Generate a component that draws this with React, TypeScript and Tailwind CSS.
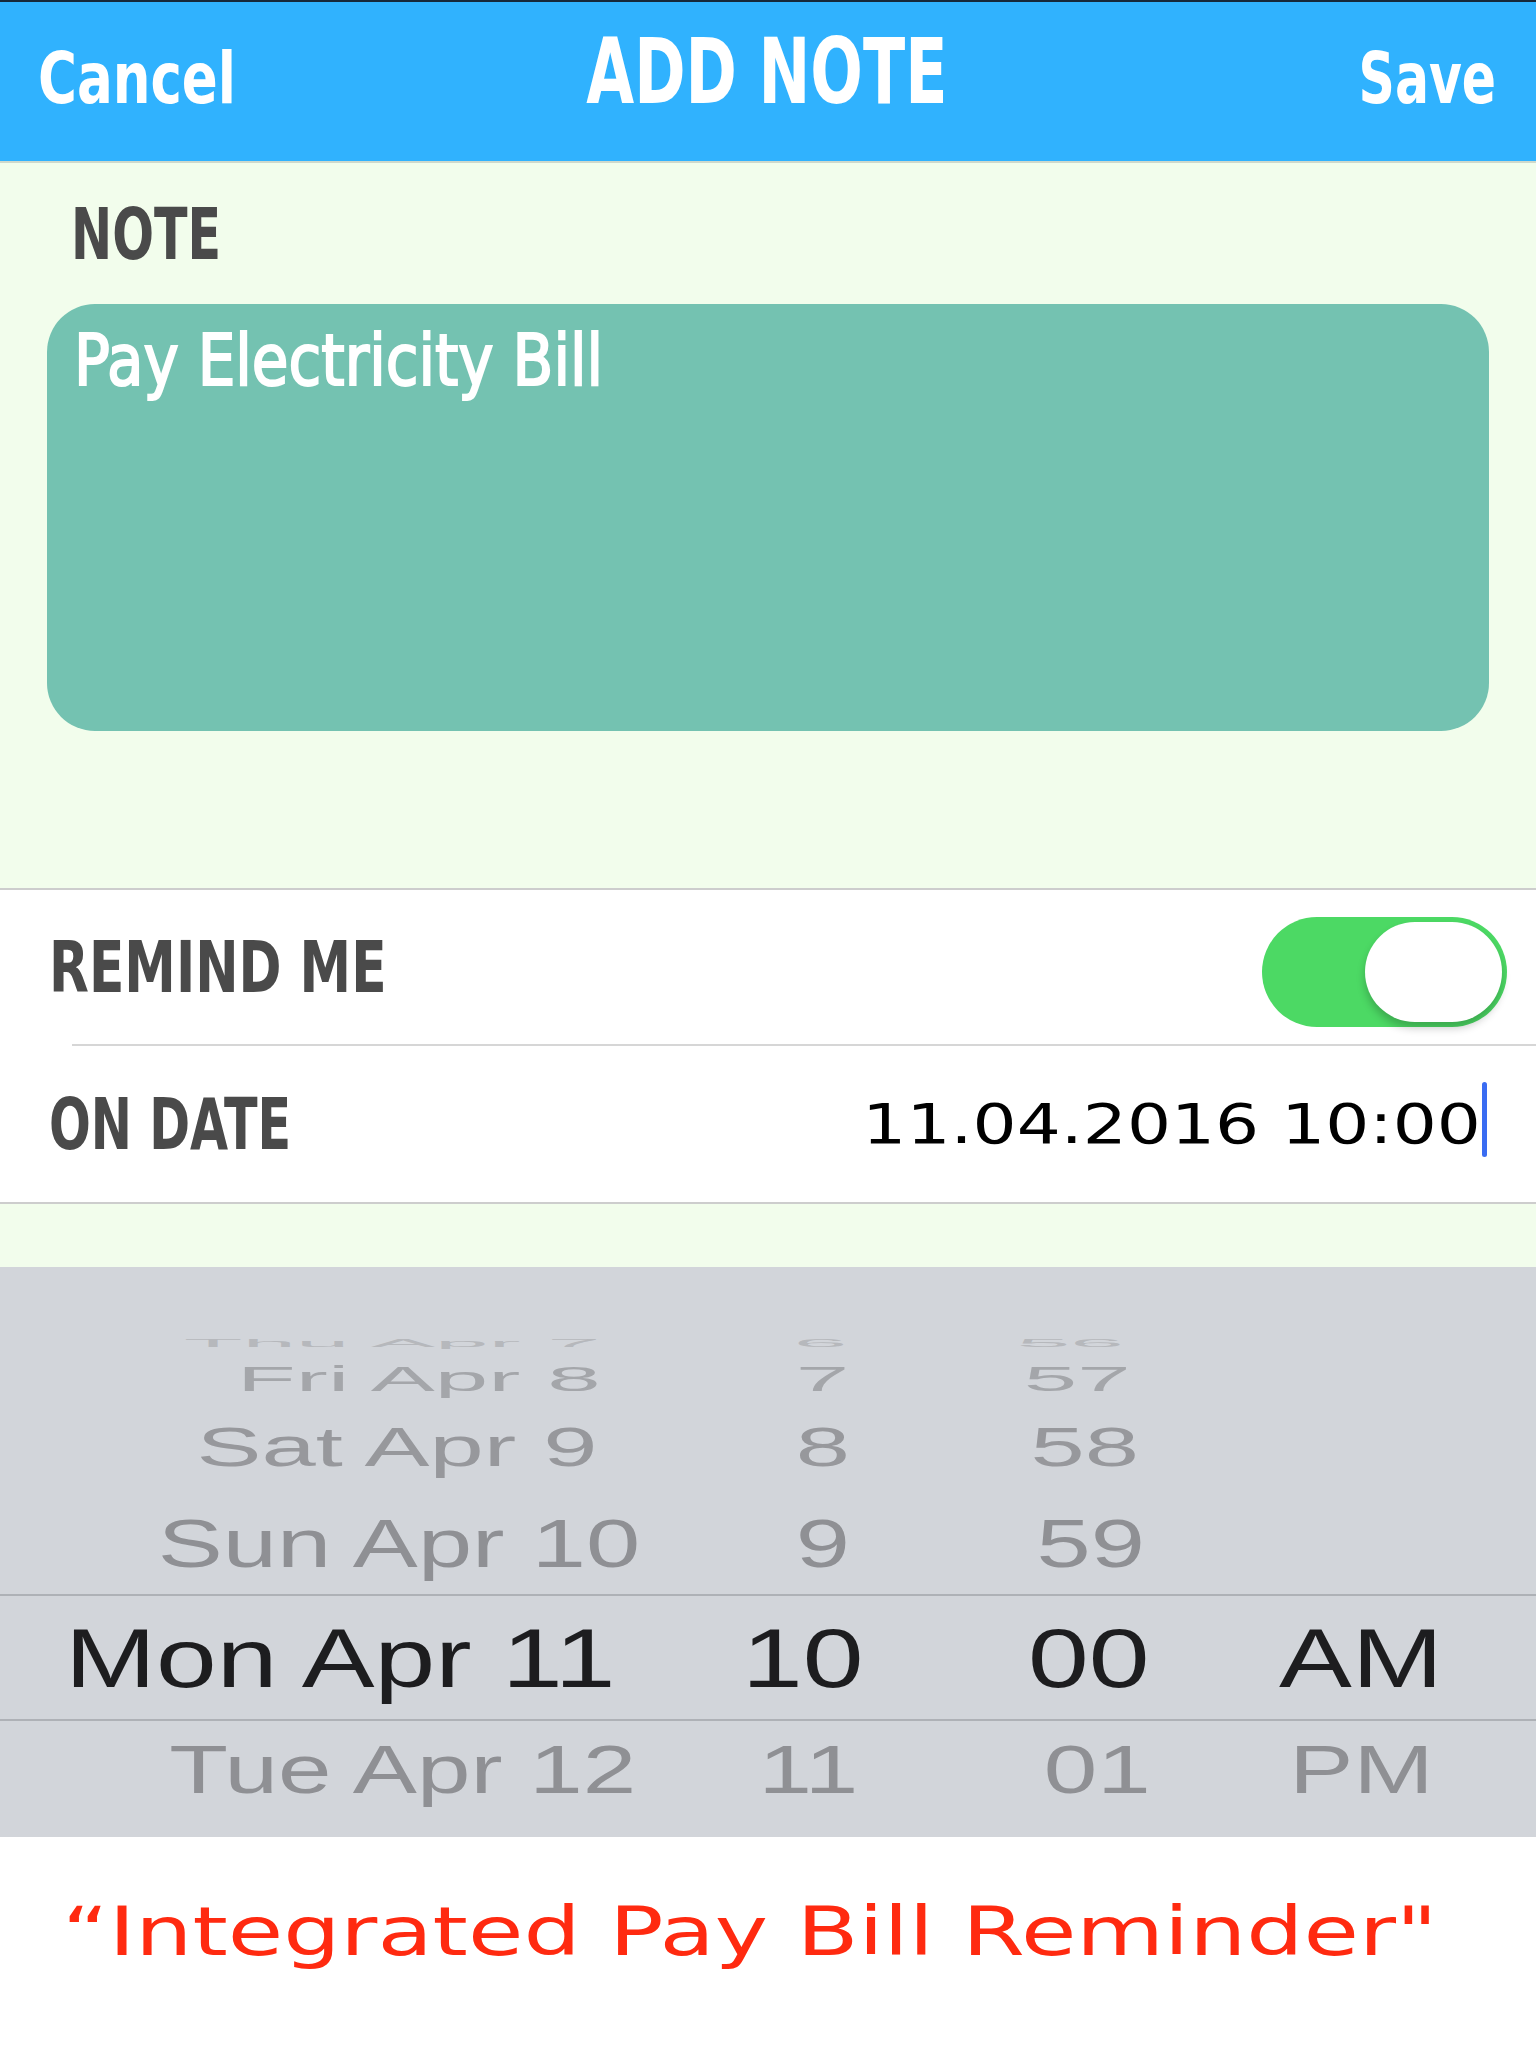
import React from 'react';

type PickerRow = {
  date: string;
  hour: string;
  min: string;
  ampm: string;
  rowH: string;
  text: string;
  datePad: string;
  hourPad: string;
  minPad: string;
};

const din = "font-['DejaVu_Sans_Condensed','DejaVu_Sans',sans-serif]";
const sf = "font-['Liberation_Sans',Arial,sans-serif]";

// wheel rows, top to bottom; sizes imitate the 3D drum of the iOS picker
const above: PickerRow[] = [
  { date: 'Thu Apr 7', hour: '6', min: '56', ampm: '', rowH: 'h-[20px]', text: 'text-[74px] text-[#b6b8bc] scale-y-[0.14]', datePad: 'pr-[39px]', hourPad: 'pl-[12px]', minPad: 'pr-[36px]' },
  { date: 'Fri Apr 8', hour: '7', min: '57', ampm: '', rowH: 'h-[49px]', text: 'text-[74px] text-[#a4a6aa] scale-y-[0.47]', datePad: 'pr-[39px]', hourPad: 'pl-[16px]', minPad: 'pr-[22px]' },
  { date: 'Sat Apr 9', hour: '8', min: '58', ampm: '', rowH: 'h-[89px]', text: 'text-[75px] text-[#97989c] scale-y-[0.73]', datePad: 'pr-[42px]', hourPad: 'pl-[16px]', minPad: 'pr-[6px]' },
  { date: 'Sun Apr 10', hour: '9', min: '59', ampm: '', rowH: 'h-[102px]', text: 'text-[75px] text-[#8f9094] scale-y-[0.91]', datePad: 'pr-[0px]', hourPad: 'pl-[16px]', minPad: 'pl-[6px]' },
];

const PickerLine: React.FC<PickerRow> = (r) => (
  <div className={`flex items-center ${r.rowH} ${sf}`}>
    <div className={`w-[640px] flex justify-end ${r.datePad}`}>
      <span className={`inline-block leading-none whitespace-nowrap origin-right scale-x-[1.3] ${r.text}`}>{r.date}</span>
    </div>
    <div className={`w-[350px] flex justify-center ${r.hourPad}`}>
      <span className={`inline-block leading-none scale-x-[1.3] ${r.text}`}>{r.hour}</span>
    </div>
    <div className={`w-[196px] flex justify-center ${r.minPad}`}>
      <span className={`inline-block leading-none scale-x-[1.3] ${r.text}`}>{r.min}</span>
    </div>
    <div className="w-[350px] flex justify-center">
      <span className={`inline-block leading-none scale-x-[1.3] ${r.text}`}>{r.ampm}</span>
    </div>
  </div>
);

const App: React.FC = () => {
  return (
    <div className="w-[1536px] h-[2048px] bg-white flex flex-col overflow-hidden">
      {/* Header */}
      <div className={`h-[163px] border-t-2 border-b-2 border-t-[#16283a] border-b-[#cfd9cc] bg-[#30b2fe] text-white font-bold ${din}`}>
        <div className="grid grid-cols-[1fr_auto_1fr] items-baseline pt-[24px] pl-[38px] pr-[40px]">
          <span className="inline-block justify-self-start origin-left scale-x-[0.83] text-[71px] leading-none">Cancel</span>
          <span className="inline-block origin-center scale-x-[0.756] text-[91px] leading-none">ADD NOTE</span>
          <span className="inline-block justify-self-end origin-right scale-x-[0.79] text-[71px] leading-none">Save</span>
        </div>
      </div>

      {/* Note */}
      <div className={`bg-[#f2fdec] pt-[36px] pb-[157px] ${din}`}>
        <div className="pl-[71px]">
          <span className="inline-block origin-left scale-x-[0.77] text-[71px] leading-none font-bold text-[#4a4a4a]">NOTE</span>
        </div>
        <div className="mt-[34px] mx-[47px] h-[427px] rounded-[48px] bg-[#74c2b1] pt-[20px] pl-[27px]">
          <span className="inline-block origin-left scale-x-[0.92] text-[72px] leading-none text-white [-webkit-text-stroke:2px_white] whitespace-nowrap">
            Pay Electricity Bill
          </span>
        </div>
      </div>

      {/* Remind / date */}
      <div className="bg-white border-t-2 border-b-2 border-[#cdcdcd]">
        <div className="h-[154px] flex items-center justify-between pl-[49px] pr-[29px]">
          <span className={`inline-block origin-left scale-x-[0.8] text-[72px] leading-none font-bold text-[#4a4a4a] whitespace-nowrap ${din}`}>
            REMIND ME
          </span>
          <div className="mt-[10px] w-[245px] h-[110px] rounded-full bg-[#4cd964] flex items-center justify-end pr-[5px]">
            <div className="w-[137px] h-[100px] rounded-full bg-white shadow-[0_6px_8px_rgba(0,0,0,0.22)]" />
          </div>
        </div>
        <div className="ml-[72px] h-[2px] bg-[#d6d6d6]" />
        <div className="h-[156px] flex items-center justify-between pl-[49px] pr-[49px]">
          <span className={`inline-block origin-left scale-x-[0.76] text-[72px] leading-none font-bold text-[#4a4a4a] whitespace-nowrap ${din}`}>
            ON DATE
          </span>
          <div className="flex items-center">
            <span className="inline-block origin-right scale-x-[1.26] text-[55px] leading-none text-black font-['DejaVu_Sans',sans-serif]">
              11.04.2016 10:00
            </span>
            <div className="ml-[1px] mb-[9px] w-[5px] h-[75px] rounded-full bg-[#3a6cf2]" />
          </div>
        </div>
      </div>

      <div className="h-[63px] bg-[#f2fdec]" />

      {/* Date picker */}
      <div className="h-[570px] bg-[#d2d5da] pt-[67px]">
        {above.map((r) => (
          <PickerLine key={r.date} {...r} />
        ))}
        <div className="h-[2px] bg-[#aeb1b6]" />
        <PickerLine
          date="Mon Apr 11"
          hour="10"
          min="00"
          ampm="AM"
          rowH="h-[123px]"
          text="text-[84px] text-[#1d1d1f]"
          datePad="pr-[25px]"
          hourPad="pr-[24px]"
          minPad="pl-[2px]"
        />
        <div className="h-[2px] bg-[#aeb1b6]" />
        <PickerLine
          date="Tue Apr 12"
          hour="11"
          min="01"
          ampm="PM"
          rowH="h-[98px]"
          text="text-[74px] text-[#8f9094] scale-y-[0.93]"
          datePad="pr-[4px]"
          hourPad="pr-[13px]"
          minPad="pl-[18px]"
        />
      </div>

      {/* Caption */}
      <div className="pt-[62px] pl-[62px]">
        <span className="inline-block origin-left scale-x-[1.345] text-[67px] leading-none text-[#ff2a10] whitespace-nowrap font-['DejaVu_Sans',sans-serif]">
          “Integrated Pay Bill Reminder"
        </span>
      </div>
    </div>
  );
};

export default App;
